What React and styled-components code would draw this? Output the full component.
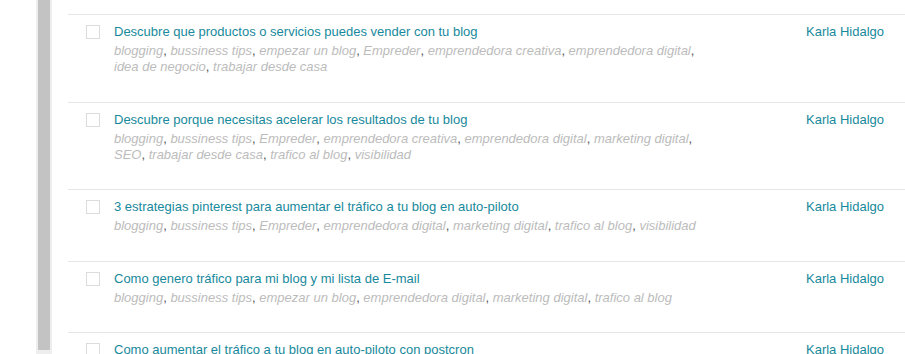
import React from "react";
import styled, { createGlobalStyle } from "styled-components";

const Global = createGlobalStyle`
  html, body { margin: 0; padding: 0; background: #fff; overflow: hidden; height: 354px; }
  body { font-family: "Liberation Sans", Arial, sans-serif; font-size: 13px; }
`;

const Page = styled.div`
  display: flex;
  height: 354px;
  overflow: hidden;
`;

const Gutter = styled.div`
  width: 36px;
  flex: none;
`;

const Rail = styled.div`
  width: 16px;
  flex: none;
  display: flex;
  flex-direction: column;
  background: #eeeeee;
`;

const RailBar = styled.div`
  height: 350px;
  margin: 0 2px;
  background: #c3c3c3;
  flex: none;
`;

const Content = styled.div`
  flex: 1;
  padding-left: 16px;
  min-width: 0;
`;

const Spacer = styled.div`
  height: 14px;
`;

const Row = styled.div`
  display: grid;
  grid-template-columns: 46px 1fr 99px;
  border-top: 1px solid #e6e6e6;
  padding: 8px 0 26.5px;
`;

const CheckCell = styled.div`
  padding: 2px 0 0 18px;
`;

const Check = styled.span`
  display: block;
  width: 12px;
  height: 12px;
  border: 1px solid #dcdcdc;
  background: #fff;
`;

const Main = styled.div`
  display: flex;
  flex-direction: column;
  padding-right: 94px;
`;

const Title = styled.a`
  color: #17899c;
  line-height: 18px;
  margin-bottom: 2px;
  text-decoration: none;
`;

const Tags = styled.div`
  line-height: 16px;
  color: #555;
`;

const Tag = styled.em`
  color: #bcbcbc;
`;

const Author = styled.a`
  color: #17899c;
  line-height: 18px;
  text-decoration: none;
`;

const rows = [
  {
    title: "Descubre que productos o servicios puedes vender con tu blog",
    tags: ["blogging", "bussiness tips", "empezar un blog", "Empreder", "emprendedora creativa", "emprendedora digital", "idea de negocio", "trabajar desde casa"],
  },
  {
    title: "Descubre porque necesitas acelerar los resultados de tu blog",
    tags: ["blogging", "bussiness tips", "Empreder", "emprendedora creativa", "emprendedora digital", "marketing digital", "SEO", "trabajar desde casa", "trafico al blog", "visibilidad"],
  },
  {
    title: "3 estrategias pinterest para aumentar el tráfico a tu blog en auto-piloto",
    tags: ["blogging", "bussiness tips", "Empreder", "emprendedora digital", "marketing digital", "trafico al blog", "visibilidad"],
  },
  {
    title: "Como genero tráfico para mi blog y mi lista de E-mail",
    tags: ["blogging", "bussiness tips", "empezar un blog", "emprendedora digital", "marketing digital", "trafico al blog"],
  },
  {
    title: "Como aumentar el tráfico a tu blog en auto-piloto con postcron",
    tags: ["blogging", "bussiness tips", "empezar un blog", "emprendedora digital"],
  },
];

export default function App() {
  return (
    <>
      <Global />
      <Page>
        <Gutter />
        <Rail>
          <RailBar />
        </Rail>
        <Content>
          <Spacer />
          {rows.map((r, i) => (
            <Row key={i}>
              <CheckCell>
                <Check />
              </CheckCell>
              <Main>
                <Title href="#">{r.title}</Title>
                <Tags>
                  {r.tags.map((t, j) => (
                    <React.Fragment key={j}>
                      <Tag>{t}</Tag>
                      {j < r.tags.length - 1 ? ", " : ""}
                    </React.Fragment>
                  ))}
                </Tags>
              </Main>
              <Author href="#">Karla Hidalgo</Author>
            </Row>
          ))}
        </Content>
      </Page>
    </>
  );
}
